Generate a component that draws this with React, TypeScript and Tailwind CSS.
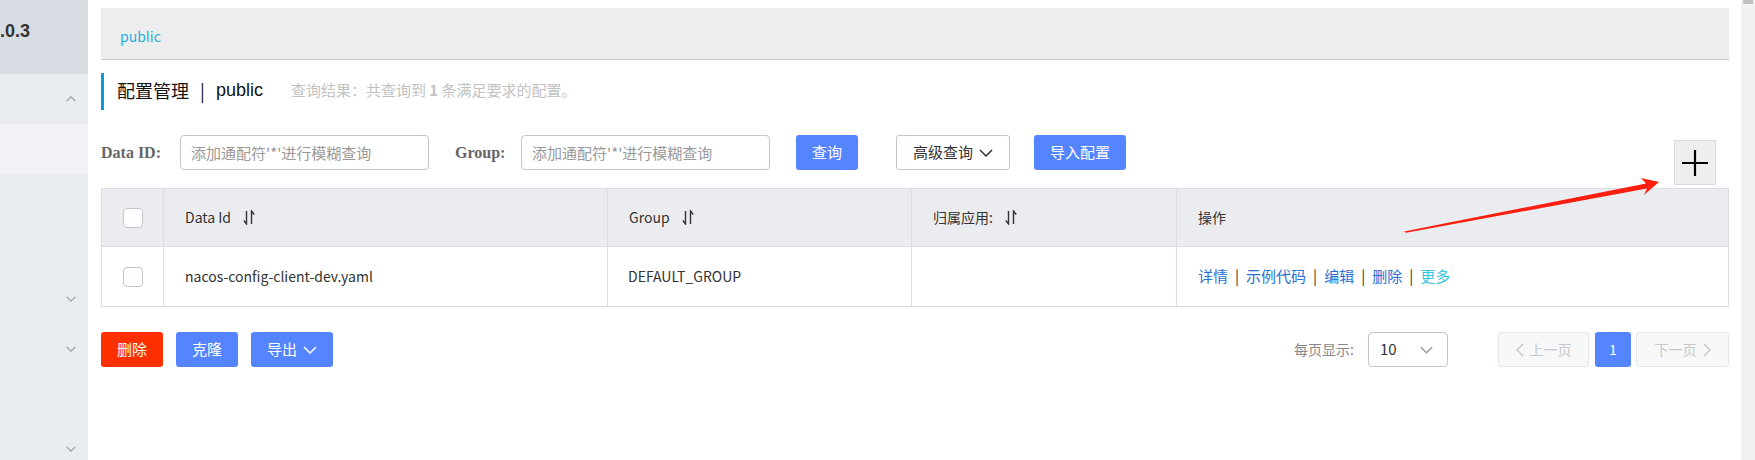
const Chevron = ({ dir = 'down', className = '' }: { dir?: 'up' | 'down' | 'left' | 'right'; className?: string }) => {
  const d = {
    down: 'M1 1 L7 7 L13 1',
    up: 'M1 7 L7 1 L13 7',
    left: 'M7 1 L1 7 L7 13',
    right: 'M1 1 L7 7 L1 13',
  }[dir];
  const box = dir === 'down' || dir === 'up' ? '0 0 14 8' : '0 0 8 14';
  return (
    <svg viewBox={box} className={className} fill="none" stroke="currentColor" strokeWidth="1.5">
      <path d={d} />
    </svg>
  );
};

const SortIcon = () => (
  <svg viewBox="0 0 12 15" className="ml-[12px] h-[15px] w-[12px] text-[#333]" fill="none" stroke="currentColor" strokeWidth="1.4">
    <path d="M3.5 1 V14 L0.8 10.5" />
    <path d="M8.5 14 V1 L11.2 4.5" />
  </svg>
);

const Checkbox = () => <div className="h-[20px] w-[20px] rounded-[4px] border border-[#c4c6cf] bg-white" />;

const columns = ['Data Id', 'Group', '归属应用:', '操作'];

export default function App() {
  return (
    <div className="relative flex h-[460px] w-full overflow-hidden bg-white font-['Noto_Sans_CJK_SC',sans-serif] text-[#333]">
      <aside className="flex w-[88px] shrink-0 flex-col bg-[#e8ebf0]">
        <div className="h-[74px] shrink-0 bg-[#d8dde4] pt-[20px]">
          <span className="block font-['Liberation_Sans',sans-serif] text-[18px] font-bold leading-[22px] text-[#333]">
            .0.3
          </span>
        </div>
        <div className="flex h-[50px] shrink-0 items-center justify-end pr-[12px] text-[#999]">
          <Chevron dir="up" className="h-[6px] w-[10px]" />
        </div>
        <div className="h-[50px] shrink-0 bg-[#f2f3f6]" />
        {[false, false, true, true, false, true].map((show, i) => (
          <div key={i} className="flex h-[50px] shrink-0 items-center justify-end pr-[12px] text-[#999]">
            {show && <Chevron dir="down" className="h-[6px] w-[10px]" />}
          </div>
        ))}
      </aside>

      <main className="flex-1 pl-[13px] pr-[12px] pt-[8px]">
        <div className="h-[52px] border-b border-[#c8c8c8] bg-[#ededed] pl-[19px] pt-[18px] text-[14px] leading-[20px] text-[#1cb0db]">
          public
        </div>

        <div className="mt-[13px] flex h-[37px] items-center border-l-[3px] border-[#0b9ad6] pb-[4px] pl-[13px]">
          <span className="text-[18px] leading-[24px] text-[#111]">配置管理</span>
          <span className="mx-[11px] text-[18px] leading-[24px] text-[#111]">|</span>
          <span className="font-['Liberation_Sans',sans-serif] text-[18px] leading-[24px] text-[#111]">public</span>
          <span className="ml-[28px] text-[15px] leading-[20px] text-[#c2c2c2]">
            查询结果：共查询到 <b className="font-bold">1</b> 条满足要求的配置。
          </span>
        </div>

        <div className="mt-[25px] flex items-start justify-between">
          <div className="flex items-center">
            <label className="w-[79px] font-['Liberation_Serif',serif] text-[16px] font-bold text-[#666]">Data ID:</label>
            <input
              readOnly
              placeholder="添加通配符'*'进行模糊查询"
              className="h-[35px] w-[249px] rounded-[4px] border border-[#c4c6cf] px-[10px] text-[15px] outline-none placeholder:text-[#999]"
            />
            <label className="ml-[26px] w-[66px] font-['Liberation_Serif',serif] text-[16px] font-bold text-[#666]">Group:</label>
            <input
              readOnly
              placeholder="添加通配符'*'进行模糊查询"
              className="h-[35px] w-[249px] rounded-[4px] border border-[#c4c6cf] px-[10px] text-[15px] outline-none placeholder:text-[#999]"
            />
            <button className="ml-[26px] h-[35px] w-[62px] rounded-[3px] bg-[#5584ff] text-[15px] text-white">查询</button>
            <button className="ml-[38px] flex h-[35px] w-[114px] items-center justify-center gap-[6px] rounded-[3px] border border-[#c4c6cf] bg-white text-[15px] text-[#333]">
              高级查询
              <Chevron className="h-[8px] w-[14px]" />
            </button>
            <button className="ml-[24px] h-[35px] w-[92px] rounded-[3px] bg-[#5584ff] text-[15px] text-white">导入配置</button>
          </div>
          <button className="mr-[13px] mt-[5px] flex h-[45px] w-[42px] items-center justify-center border border-[#dcdcdc] bg-[#eeeeee]">
            <svg viewBox="0 0 26 26" className="h-[26px] w-[26px]" stroke="#000" strokeWidth="2.2">
              <path d="M0 13 H26 M13 0 V26" />
            </svg>
          </button>
        </div>

        <div className="mt-[3px] border border-[#dcdee3] text-[14px]">
          <div className="grid h-[58px] grid-cols-[61px_444px_304px_265px_1fr] border-b border-[#dcdee3] bg-[#ebecf0]">
            <div className="flex items-center justify-center">
              <Checkbox />
            </div>
            {columns.map((c, i) => (
              <div key={c} className="flex items-center border-l border-[#dcdee3] pl-[21px]">
                {c}
                {i < 3 && <SortIcon />}
              </div>
            ))}
          </div>
          <div className="grid h-[59px] grid-cols-[61px_444px_304px_265px_1fr]">
            <div className="flex items-center justify-center">
              <Checkbox />
            </div>
            <div className="flex items-center border-l border-[#dcdee3] pl-[21px]">nacos-config-client-dev.yaml</div>
            <div className="flex items-center border-l border-[#dcdee3] pl-[20px]">DEFAULT_GROUP</div>
            <div className="border-l border-[#dcdee3]" />
            <div className="flex items-center gap-[7px] border-l border-[#dcdee3] pl-[21px] text-[15px]">
              <span className="text-[#2a6fd6]">详情</span>
              <span className="text-[#333]">|</span>
              <span className="text-[#2a6fd6]">示例代码</span>
              <span className="text-[#333]">|</span>
              <span className="text-[#2a6fd6]">编辑</span>
              <span className="text-[#333]">|</span>
              <span className="text-[#2a6fd6]">删除</span>
              <span className="text-[#333]">|</span>
              <span className="text-[#38c6e2]">更多</span>
            </div>
          </div>
        </div>

        <div className="mt-[25px] flex h-[35px] items-center justify-between">
          <div className="flex gap-[13px]">
            <button className="h-[35px] w-[62px] rounded-[3px] bg-[#ff3000] text-[15px] text-white">删除</button>
            <button className="h-[35px] w-[62px] rounded-[3px] bg-[#5584ff] text-[15px] text-white">克隆</button>
            <button className="flex h-[35px] w-[82px] items-center justify-center gap-[6px] rounded-[3px] bg-[#5584ff] text-[15px] text-white">
              导出
              <Chevron className="h-[8px] w-[14px]" />
            </button>
          </div>
          <div className="flex items-center">
            <span className="text-[14px] text-[#888]">每页显示:</span>
            <div className="ml-[14px] flex h-[35px] w-[80px] items-center justify-between rounded-[4px] border border-[#c4c6cf] pl-[11px] pr-[14px] text-[15px] text-[#333]">
              10
              <Chevron className="h-[8px] w-[13px] text-[#999]" />
            </div>
            <button className="ml-[50px] flex h-[35px] w-[91px] items-center justify-center gap-[6px] rounded-[3px] border border-[#e6e7eb] bg-[#f7f8fa] text-[14px] text-[#c8c8c8]">
              <Chevron dir="left" className="h-[14px] w-[8px]" />
              上一页
            </button>
            <button className="ml-[6px] h-[35px] w-[36px] rounded-[3px] bg-[#5584ff] text-[14px] text-white">1</button>
            <button className="ml-[5px] flex h-[35px] w-[93px] items-center justify-center gap-[6px] rounded-[3px] border border-[#e6e7eb] bg-[#f7f8fa] text-[14px] text-[#c8c8c8]">
              下一页
              <Chevron dir="right" className="h-[14px] w-[8px]" />
            </button>
          </div>
        </div>
      </main>

      <div className="w-[14px] shrink-0 bg-[#f1f1f1]">
        <div className="mx-auto h-[4px] w-[10px] bg-[#c1c1c1]" />
      </div>

      <svg className="pointer-events-none absolute left-0 top-0 h-[460px] w-[1755px]" viewBox="0 0 1755 460">
        <polygon
          fill="#fc1f10"
          points="1404,231.6 1646,183.4 1641,178 1659,182 1644,195 1647,188.6 1406,232.8"
        />
      </svg>
    </div>
  );
}
